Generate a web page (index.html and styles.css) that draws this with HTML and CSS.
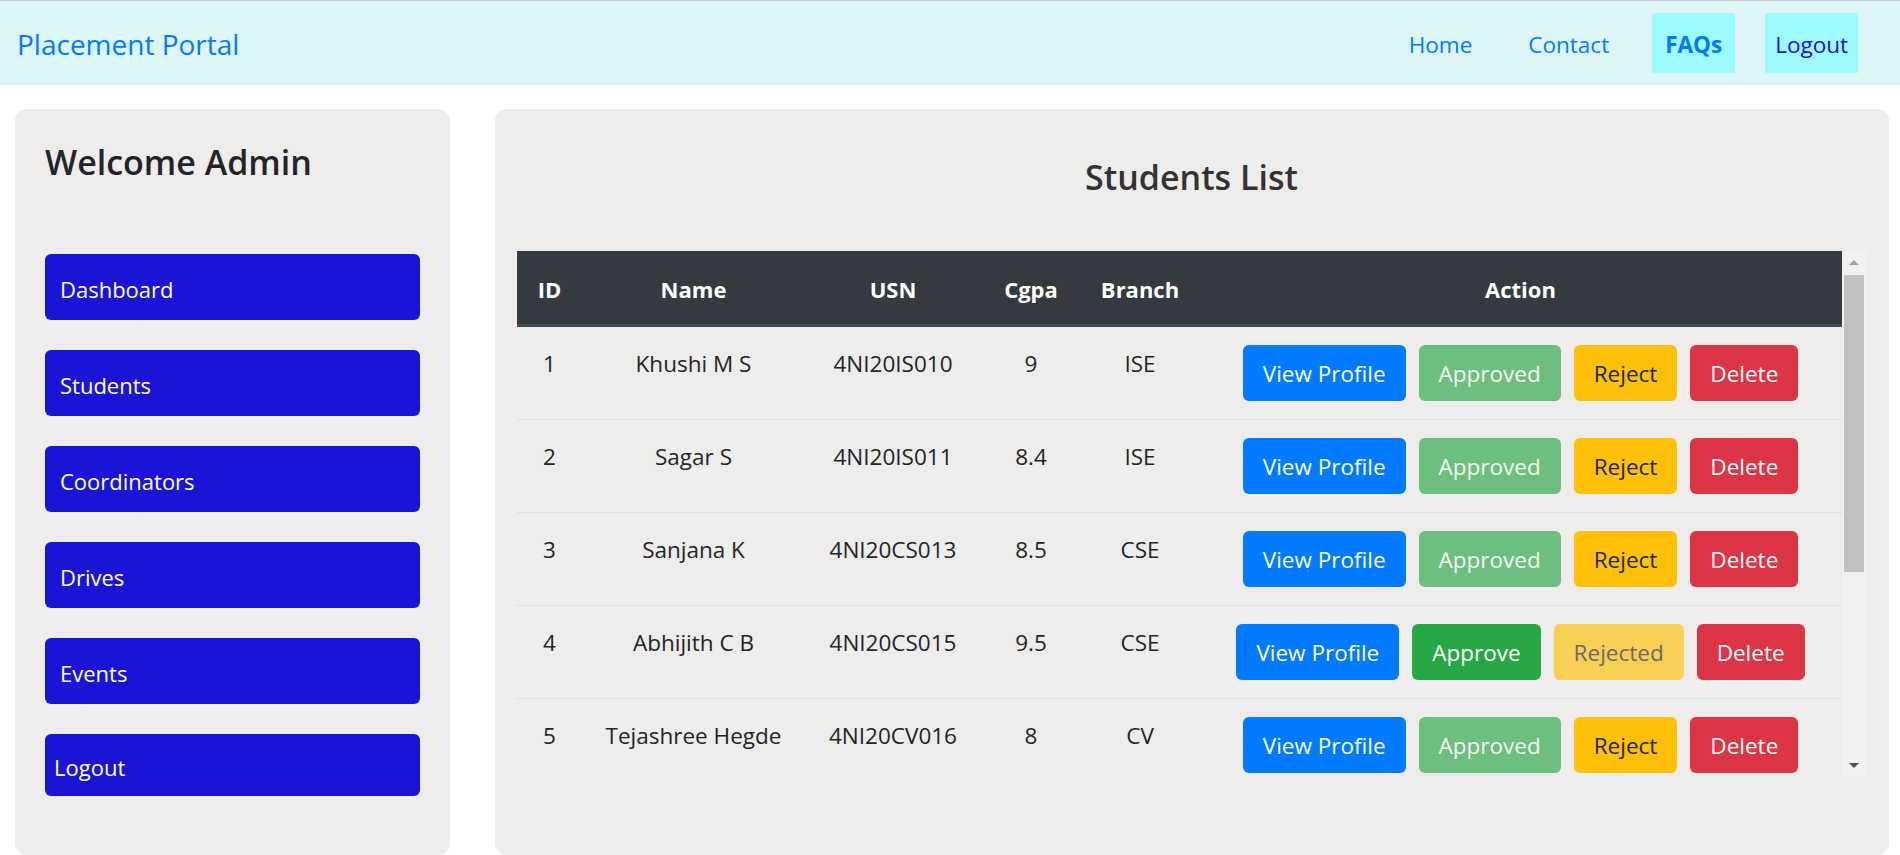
FILE: index.html
```html
<!DOCTYPE html>
<html lang="en">
<head>
<meta charset="utf-8">
<title>Placement Portal - Admin</title>
<link rel="stylesheet" href="styles.css">
</head>
<body>
<nav class="navbar">
  <a class="brand" href="#">Placement Portal</a>
  <ul class="nav">
    <li><a class="nav-link" href="#">Home</a></li>
    <li><a class="nav-link" href="#">Contact</a></li>
    <li><a class="nav-link nav-box nav-bold" href="#">FAQs</a></li>
    <li><a class="nav-link nav-box nav-logout" href="#">Logout</a></li>
  </ul>
</nav>
<div class="layout">
  <aside class="sidebar">
    <h2 class="welcome">Welcome Admin</h2>
    <div class="menu">
      <a class="menu-btn" href="#">Dashboard</a>
      <a class="menu-btn" href="#">Students</a>
      <a class="menu-btn" href="#">Coordinators</a>
      <a class="menu-btn" href="#">Drives</a>
      <a class="menu-btn" href="#">Events</a>
      <a class="menu-btn menu-btn-short" href="#">Logout</a>
    </div>
  </aside>
  <main class="content">
    <h2 class="title">Students List</h2>
    <div class="table-frame">
      <div class="table-viewport">
        <table class="students">
          <colgroup>
            <col class="c-id"><col class="c-name"><col class="c-usn"><col class="c-cgpa"><col class="c-branch"><col class="c-action">
          </colgroup>
          <thead>
            <tr><th>ID</th><th>Name</th><th>USN</th><th>Cgpa</th><th>Branch</th><th>Action</th></tr>
          </thead>
          <tbody>
            <tr>
              <td>1</td><td>Khushi M S</td><td>4NI20IS010</td><td>9</td><td>ISE</td>
              <td><div class="actions"><button class="btn btn-primary">View Profile</button><button class="btn btn-success disabled">Approved</button><button class="btn btn-warning">Reject</button><button class="btn btn-danger">Delete</button></div></td>
            </tr>
            <tr>
              <td>2</td><td>Sagar S</td><td>4NI20IS011</td><td>8.4</td><td>ISE</td>
              <td><div class="actions"><button class="btn btn-primary">View Profile</button><button class="btn btn-success disabled">Approved</button><button class="btn btn-warning">Reject</button><button class="btn btn-danger">Delete</button></div></td>
            </tr>
            <tr>
              <td>3</td><td>Sanjana K</td><td>4NI20CS013</td><td>8.5</td><td>CSE</td>
              <td><div class="actions"><button class="btn btn-primary">View Profile</button><button class="btn btn-success disabled">Approved</button><button class="btn btn-warning">Reject</button><button class="btn btn-danger">Delete</button></div></td>
            </tr>
            <tr>
              <td>4</td><td>Abhijith C B</td><td>4NI20CS015</td><td>9.5</td><td>CSE</td>
              <td><div class="actions"><button class="btn btn-primary">View Profile</button><button class="btn btn-success">Approve</button><button class="btn btn-warning disabled">Rejected</button><button class="btn btn-danger">Delete</button></div></td>
            </tr>
            <tr>
              <td>5</td><td>Tejashree Hegde</td><td>4NI20CV016</td><td>8</td><td>CV</td>
              <td><div class="actions"><button class="btn btn-primary">View Profile</button><button class="btn btn-success disabled">Approved</button><button class="btn btn-warning">Reject</button><button class="btn btn-danger">Delete</button></div></td>
            </tr>
          </tbody>
        </table>
      </div>
      <div class="scrollbar" aria-hidden="true">
        <div class="sb-btn"><span class="sb-arrow sb-arrow-up"></span></div>
        <div class="sb-track"><div class="sb-thumb"></div></div>
        <div class="sb-btn"><span class="sb-arrow sb-arrow-down"></span></div>
      </div>
    </div>
  </main>
</div>
</body>
</html>
```

FILE: styles.css
```css
* { box-sizing: border-box; }

html, body {
  margin: 0;
  height: 855px;
  overflow: hidden;
}

body {
  font-family: "Open Sans", "Noto Sans", sans-serif;
  background: #ffffff;
  color: #212529;
}

/* ---------- navbar ---------- */
.navbar {
  display: flex;
  align-items: center;
  justify-content: space-between;
  height: 85px;
  border-top: 1px solid #c9c9c9;
  background: #ddf5f7;
  padding: 0 42px 0 17px;
}

.brand {
  font-size: 28px;
  color: #007bff;
  text-decoration: none;
  padding-top: 2px;
}

.nav {
  display: flex;
  gap: 30px;
  list-style: none;
  margin: 0;
  padding: 0;
}

.nav-link {
  display: flex;
  align-items: center;
  height: 60px;
  padding: 2px 13px 0;
  font-size: 22.5px;
  color: #007bff;
  text-decoration: none;
}

.nav-box { background: #9ffafc; }

.nav-bold { font-weight: 700; }

.nav-logout {
  color: #1a12d4;
  padding: 2px 10px 0;
}

/* ---------- layout ---------- */
.layout {
  display: flex;
  gap: 45px;
  padding: 24px 11px 0 15px;
}

.sidebar {
  flex: none;
  width: 435px;
  height: 746px;
  background: #eeedeb;
  border-radius: 12px;
  padding: 32px 30px;
}

.welcome {
  margin: 0 0 71px;
  font-size: 34px;
  font-weight: 600;
  line-height: 42px;
  color: #212529;
}

.menu {
  display: flex;
  flex-direction: column;
  gap: 30px;
}

.menu-btn {
  display: flex;
  align-items: center;
  height: 66px;
  padding: 3px 15px 0;
  background: #1a14d4;
  color: #ffffff;
  border-radius: 6px;
  font-size: 22px;
  text-decoration: none;
}

.menu-btn-short {
  height: 62px;
  padding-left: 9px;
}

/* ---------- main content ---------- */
.content {
  flex: 1;
  min-width: 0;
  height: 746px;
  background: #eeedeb;
  border-radius: 12px;
  padding: 47px 23px 0 22px;
}

.title {
  margin: 0 0 53px;
  text-align: center;
  font-size: 34px;
  font-weight: 600;
  line-height: 42px;
  color: #333333;
}

.table-frame {
  display: flex;
  height: 525px;
}

.table-viewport {
  flex: 1;
  min-width: 0;
  overflow: hidden;
}

/* drawn scrollbar */
.scrollbar {
  flex: none;
  width: 24px;
  display: flex;
  flex-direction: column;
  background: #f1f1f1;
}

.sb-btn {
  flex: none;
  height: 22px;
  display: flex;
  align-items: center;
  justify-content: center;
}

.sb-arrow {
  width: 0;
  height: 0;
  border-left: 5px solid transparent;
  border-right: 5px solid transparent;
}

.sb-arrow-up { border-bottom: 5px solid #a3a3a3; }
.sb-arrow-down { border-top: 5px solid #505050; }

.sb-track {
  flex: 1;
  padding: 2px 2px 0;
}

.sb-thumb {
  height: 297px;
  background: #c1c1c1;
}

/* ---------- table ---------- */
.students {
  width: 100%;
  border-collapse: separate;
  border-spacing: 0;
  table-layout: fixed;
  color: #212529;
  font-size: 22.5px;
}

.c-id { width: 65px; }
.c-name { width: 223px; }
.c-usn { width: 176px; }
.c-cgpa { width: 100px; }
.c-branch { width: 118px; }
.c-action { width: auto; }

.students th {
  background: #343a40;
  color: #ffffff;
  font-weight: 700;
  font-size: 22px;
  line-height: 38px;
  padding: 19px 0 16px;
  border-bottom: 3px solid #454d55;
  text-align: center;
}

.students td {
  padding: 18px 0;
  line-height: 38px;
  vertical-align: top;
  text-align: center;
  white-space: nowrap;
}

.students tbody tr + tr td { border-top: 1px solid #dfdee6; }

.actions {
  display: flex;
  justify-content: center;
  gap: 13px;
}

.btn {
  display: inline-flex;
  align-items: center;
  height: 56px;
  padding: 1px 20px 0;
  border: none;
  border-radius: 6px;
  font-family: "Open Sans", "Noto Sans", sans-serif;
  font-size: 22.5px;
  line-height: normal;
  cursor: pointer;
}

.btn-primary { background: #007bff; color: #ffffff; }
.btn-success { background: #28a745; color: #ffffff; }
.btn-warning { background: #ffc107; color: #212529; }
.btn-danger { background: #dc3545; color: #ffffff; }
.btn.disabled { opacity: 0.65; cursor: default; }
```
